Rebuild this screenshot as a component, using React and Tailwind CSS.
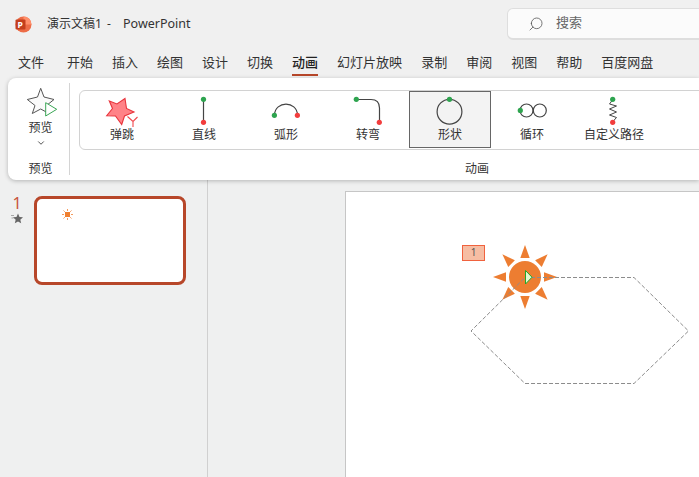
import { Search, ChevronDown } from "lucide-react";

const tabs = ["文件", "开始", "插入", "绘图", "设计", "切换", "动画", "幻灯片放映", "录制", "审阅", "视图", "帮助", "百度网盘"];

const GREEN = "#2ea44f";
const RED = "#f23d3d";
const LINE = "#444444";

function Dots({ from, to }) {
  return (
    <>
      {from && <circle cx={from[0]} cy={from[1]} r="2.6" fill={GREEN} />}
      {to && <circle cx={to[0]} cy={to[1]} r="2.6" fill={RED} />}
    </>
  );
}

const gallery = [
  {
    label: "弹跳",
    box: "81 91 82 36",
    icon: (
      <>
        <polygon
          points="125,98.5 126.5,108.5 134,112 124.5,116 121.7,124.5 115.5,116 106.7,115.7 112.5,108.5 109.3,101 117,104"
          fill="#ff8287"
          stroke="#e8343c"
          strokeWidth="1.1"
        />
        <path d="M127.5 116.5 L133 121.500 L137.5 117 M133 121.500 V127" fill="none" stroke="#f0484d" strokeWidth="1.1" />
      </>
    ),
  },
  {
    label: "直线",
    box: "163 91 82 36",
    icon: (
      <>
        <path d="M203.5 99 V122" stroke={LINE} strokeWidth="1.2" fill="none" />
        <Dots from={[203.5, 99.3]} to={[203.5, 122.3]} />
      </>
    ),
  },
  {
    label: "弧形",
    box: "245 91 82 36",
    icon: (
      <>
        <path d="M274.5 115 C275 100.500 297 100.500 297.500 115" stroke={LINE} strokeWidth="1.2" fill="none" />
        <Dots from={[274.4, 115.3]} to={[297.4, 115.3]} />
      </>
    ),
  },
  {
    label: "转弯",
    box: "327 91 82 36",
    icon: (
      <>
        <path d="M356 99.500 H371 Q379.500 99.500 379.500 108 V122" stroke={LINE} strokeWidth="1.2" fill="none" />
        <Dots from={[356.3, 99.3]} to={[379.3, 122.3]} />
      </>
    ),
  },
  {
    label: "形状",
    box: "409 91 82 36",
    selected: true,
    icon: (
      <>
        <circle cx="449.500" cy="111.700" r="12.400" stroke={LINE} strokeWidth="1.2" fill="none" />
        <Dots from={[449.5, 99.3]} />
      </>
    ),
  },
  {
    label: "循环",
    box: "491 91 82 36",
    icon: (
      <>
        <circle cx="526.500" cy="110.500" r="6.500" stroke={LINE} strokeWidth="1.2" fill="none" />
        <circle cx="539.800" cy="110.500" r="6.500" stroke={LINE} strokeWidth="1.2" fill="none" />
        <Dots from={[520.3, 110.4]} />
      </>
    ),
  },
  {
    label: "自定义路径",
    box: "573 91 82 36",
    icon: (
      <>
        <path
          d="M612.500 100 L609.500 104 L616.500 106 L609.500 109 L616.500 112 L609.500 115 L616.500 117.500 L612.500 122"
          stroke={LINE}
          fill="none"
        />
        <Dots from={[612.7, 99.3]} to={[612.7, 122.3]} />
      </>
    ),
  },
];

const rays = [0, 45, 90, 135, 180, 225, 270, 315];

export default function App() {
  return (
    <div className="relative flex h-[477px] w-[699px] flex-col overflow-hidden bg-[#f0f0f0] font-['Noto_Sans','Noto_Sans_CJK_SC',sans-serif] text-xs text-[#333333]">
      <div className="flex h-[48px] shrink-0 items-center">
        <svg className="ml-[15px] h-[17px] w-[17px]" viewBox="0 0 17 17">
          <circle cx="8.500" cy="8.500" r="8" fill="#ed6c47" />
          <path d="M8.500 .5 A8 8 0 0 1 16.500 8.500 H8.500 Z" fill="#ff8f6b" />
          <rect x="0.500" y="3.500" width="10" height="10" rx="1" fill="#c43e1c" />
          <text x="2.600" y="11.500" fontSize="8.500" fontWeight="700" fill="#ffffff">P</text>
        </svg>
        <span className="ml-[15px] w-[60px]">演示文稿1</span>
        <span className="w-[16px]">-</span>
        <span className="text-[12.500px]">PowerPoint</span>
        <div className="ml-auto flex h-[32px] w-[200px] translate-x-[8px] items-center rounded-l-md border border-b-2 border-[#dedede] bg-[#fbfbfb] pl-[20px]">
          <Search className="h-[16px] w-[16px] -scale-x-100 text-[#555555]" strokeWidth={1.2} />
          <span className="ml-[12px] -translate-y-px text-[13px] text-[#666666]">搜索</span>
        </div>
      </div>

      <div className="flex h-[30px] shrink-0 items-center gap-[19px] pl-[18px] text-[13px]">
        {tabs.map((tab) => (
          <div
            key={tab}
            className={
              tab === "动画"
                ? "mt-[2px] h-[24px] border-b-2 border-[#b7472a] font-medium leading-[20px] text-[#222222]"
                : tab === "文件"
                  ? "mt-[2px] mr-[4px] h-[24px] border-b-2 border-transparent leading-[20px]"
                  : "mt-[2px] h-[24px] border-b-2 border-transparent leading-[20px]"
            }
          >
            {tab}
          </div>
        ))}
      </div>

      <div className="z-10 ml-[8px] flex h-[102px] shrink-0 rounded-l-lg bg-white shadow-[0_1px_4px_rgba(0,0,0,0.25)]">
        <div className="my-[5px] flex w-[62px] shrink-0 flex-col items-center border-r border-[#d4d4d4] pl-[4px]">
          <svg className="mt-[3px] h-[32px] w-[32px] shrink-0" viewBox="25 86 32 32">
            <polygon
              points="40.700,88.300 44,97 54,99.500 46.500,105.500 49,113.500 40.700,109 32.300,113.500 35,105.500 27.300,99.500 37.500,97"
              fill="#fafafa"
              stroke="#555555"
            />
            <polygon points="45.700,102.700 45.700,116 56.700,109.300" fill="#ffffff" stroke="#3aa655" />
          </svg>
          <span className="mt-[2px] leading-[16px]">预览</span>
          <ChevronDown className="mt-[2px] h-[10px] w-[10px] text-[#333333]" strokeWidth={2} />
          <span className="mt-auto mb-[-2px] leading-[16px]">预览</span>
        </div>

        <div className="flex w-[814px] shrink-0 flex-col pb-[3px]">
          <div className="mt-[12px] ml-[9px] flex h-[60px] rounded-l-md border border-[#d2d2d2] pl-px">
            {gallery.map((item) => (
              <div
                key={item.label}
                className={
                  item.selected
                    ? "flex h-[57px] w-[82px] shrink-0 flex-col items-center bg-[#f3f3f3] ring-1 ring-[#666666] ring-inset"
                    : "flex h-[57px] w-[82px] shrink-0 flex-col items-center"
                }
              >
                <svg className="h-[36px] w-[82px] shrink-0" viewBox={item.box}>
                  {item.icon}
                </svg>
                <span className="translate-y-px leading-[14px] whitespace-nowrap">{item.label}</span>
              </div>
            ))}
          </div>
          <span className="mt-auto text-center leading-[16px]">动画</span>
        </div>
      </div>

      <div className="flex min-h-0 flex-1 bg-[#eff0f0]">
        <div className="flex w-[208px] shrink-0 items-start border-r border-[#d0d0d0] pt-[16px]">
          <div className="flex w-[34px] shrink-0 flex-col items-center">
            <span className="text-base leading-[14px] text-[#c8553d]">1</span>
            <svg className="mt-[3px] h-[11px] w-[12px]" viewBox="0 0 12 11">
              <polygon points="7,0.500 8.500,4 12,4.300 9.300,6.700 10.200,10.300 7,8.400 3.800,10.300 4.700,6.700 2,4.300 5.500,4" fill="#666666" />
              <path d="M0 2.500 H3 M0.500 5 H2.500" stroke="#888888" strokeWidth="0.700" />
            </svg>
          </div>
          <div className="flex h-[89px] w-[152px] shrink-0 rounded-lg border-[3px] border-[#b7472a] bg-white pt-[10px] pl-[25px]">
            <svg className="h-[11px] w-[11px]" viewBox="0 0 11 11">
              <rect x="3" y="3" width="5" height="5" fill="#f07f2e" />
              <path
                d="M5.500 0 V2 M5.500 9 V11 M0 5.500 H2 M9 5.500 H11 M1.500 1.500 L2.800 2.800 M8.200 8.200 L9.500 9.500 M9.500 1.500 L8.200 2.800 M2.800 8.200 L1.500 9.500"
                stroke="#f59a5c"
              />
            </svg>
          </div>
        </div>

        <div className="min-w-0 flex-1 pt-[11px] pl-[137px]">
          <div className="relative h-[400px] w-[500px] border border-[#c6c6c6] bg-white">
            <div className="absolute top-[53px] left-[116px] flex h-[16px] w-[23px] items-center justify-center border border-[#f0623e] bg-[#f6bda3] text-[10px] text-[#555555]">
              1
            </div>
            <svg className="absolute top-0 left-0 h-[300px] w-[353px]" viewBox="346 192 353 300">
              <g transform="translate(525 277)" fill="#ed7d31">
                <circle r="16" />
                {rays.map((deg) => (
                  <polygon key={deg} points="-4.700,-19 4.700,-19 0,-32" transform={`rotate(${deg})`} />
                ))}
              </g>
              <polygon
                points="525,277.500 634,277.500 688.500,331 634,383.500 525,383.500 471,331"
                fill="none"
                stroke="#8c8c8c"
                strokeDasharray="4 2"
              />
              <polygon points="525.500,270.500 525.500,284 532,277.200" fill="#e4f7cf" stroke="#22a82a" />
            </svg>
          </div>
        </div>
      </div>
    </div>
  );
}
